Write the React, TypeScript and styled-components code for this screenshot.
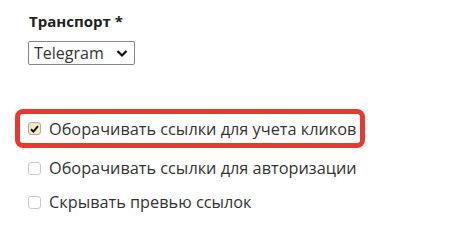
import React, { useState } from "react";
import styled, { createGlobalStyle } from "styled-components";

const GlobalStyle = createGlobalStyle`
  html, body {
    margin: 0;
    padding: 0;
    background: #fff;
  }
  body {
    font-family: "Open Sans", "Liberation Sans", sans-serif;
    color: #333;
  }
`;

const StyledPage = styled.div`
  width: 459px;
  height: 231px;
  box-sizing: border-box;
  padding: 11px 0 0 28px;
`;

const StyledLabel = styled.p`
  margin: 0 0 10px 1px;
  font-weight: 700;
  font-size: 15px;
  line-height: 20px;
  color: #222;
`;

const StyledSelectBox = styled.div`
  position: relative;
  width: 107px;
  height: 24px;
  margin-bottom: 44px;
`;

const StyledSelect = styled.select`
  appearance: none;
  width: 100%;
  height: 100%;
  box-sizing: border-box;
  border: 1px solid #858585;
  border-radius: 2px;
  background: #fff;
  padding: 0 0 0 5px;
  font-family: inherit;
  font-size: 16px;
  color: #333;
  outline: none;
`;

const StyledChevron = styled.svg`
  position: absolute;
  right: 7px;
  top: 8px;
  pointer-events: none;
`;

const StyledList = styled.div`
  display: flex;
  flex-direction: column;
`;

const StyledRow = styled.label<{ $highlight?: boolean }>`
  display: flex;
  align-items: center;
  gap: 8px;
  height: ${(p) => (p.$highlight ? "29px" : "34px")};
  margin-left: ${(p) => (p.$highlight ? "-13px" : "0")};
  padding-left: ${(p) => (p.$highlight ? "8px" : "0")};
  width: ${(p) => (p.$highlight ? "332px" : "auto")};
  border: ${(p) => (p.$highlight ? "5px solid #e53a32" : "none")};
  border-radius: 8px;
  margin-bottom: ${(p) => (p.$highlight ? "3px" : "0")};
  font-size: 16.3px;
  color: #333;
  cursor: pointer;
`;

const StyledBox = styled.span<{ $checked: boolean }>`
  flex: none;
  width: 13px;
  height: 13px;
  box-sizing: border-box;
  border-radius: 3px;
  border: 1px solid ${(p) => (p.$checked ? "#b9a98a" : "#c9c9c9")};
  background: ${(p) => (p.$checked ? "#f3e7cb" : "#fff")};
  display: flex;
  align-items: center;
  justify-content: center;
`;

const options = [
  { label: "Оборачивать ссылки для учета кликов", checked: true, highlight: true },
  { label: "Оборачивать ссылки для авторизации", checked: false },
  { label: "Скрывать превью ссылок", checked: false },
];

export default function App() {
  const [checked, setChecked] = useState(options.map((o) => o.checked));

  return (
    <>
      <GlobalStyle />
      <StyledPage>
        <StyledLabel>Транспорт *</StyledLabel>
        <StyledSelectBox>
          <StyledSelect defaultValue="telegram">
            <option value="telegram">Telegram</option>
          </StyledSelect>
          <StyledChevron width="12" height="9" viewBox="0 0 12 9">
            <path d="M1.5 2 L6 6.5 L10.5 2" fill="none" stroke="#111" strokeWidth="2.2" />
          </StyledChevron>
        </StyledSelectBox>
        <StyledList>
          {options.map((o, i) => (
            <StyledRow
              key={o.label}
              $highlight={o.highlight}
              onClick={() => setChecked((c) => c.map((v, j) => (j === i ? !v : v)))}
            >
              <StyledBox $checked={checked[i]}>
                {checked[i] && (
                  <svg width="9" height="8" viewBox="0 0 9 8">
                    <path d="M1 4.2 L3.4 6.5 L8 1.2" fill="none" stroke="#111" strokeWidth="1.9" />
                  </svg>
                )}
              </StyledBox>
              {o.label}
            </StyledRow>
          ))}
        </StyledList>
      </StyledPage>
    </>
  );
}
